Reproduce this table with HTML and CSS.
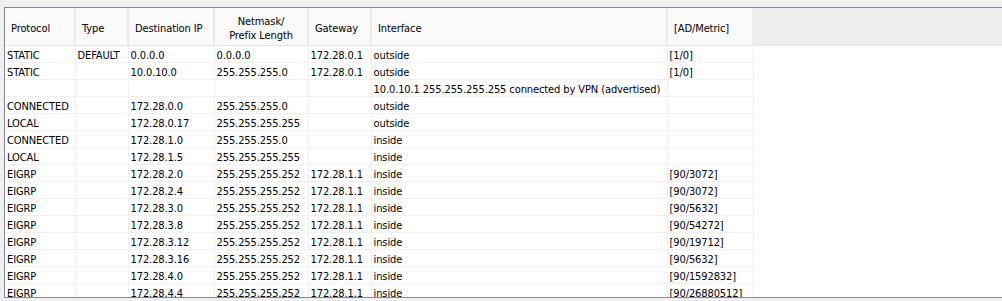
FILE: index.html
```html
<!DOCTYPE html>
<html>
<head>
    <title>Routing Table</title>
    <link rel="stylesheet" href="styles.css">
</head>
<body>
    <div class="grid">
        <table class="routes">
            <colgroup>
                <col class="c-proto">
                <col class="c-type">
                <col class="c-dest">
                <col class="c-mask">
                <col class="c-gw">
                <col class="c-if">
                <col class="c-metric">
                <col>
            </colgroup>
            <thead>
                <tr>
                    <th>Protocol</th>
                    <th>Type</th>
                    <th>Destination IP</th>
                    <th class="center">Netmask/<br>Prefix Length</th>
                    <th>Gateway</th>
                    <th>Interface</th>
                    <th>[AD/Metric]</th>
                    <th class="filler"></th>
                </tr>
            </thead>
            <tbody>
                <tr><td>STATIC</td><td>DEFAULT</td><td>0.0.0.0</td><td>0.0.0.0</td><td>172.28.0.1</td><td>outside</td><td>[1/0]</td><td class="filler"></td></tr>
                <tr><td>STATIC</td><td></td><td>10.0.10.0</td><td>255.255.255.0</td><td>172.28.0.1</td><td>outside</td><td>[1/0]</td><td class="filler"></td></tr>
                <tr><td></td><td></td><td></td><td></td><td></td><td>10.0.10.1 255.255.255.255 connected by VPN (advertised)</td><td></td><td class="filler"></td></tr>
                <tr><td>CONNECTED</td><td></td><td>172.28.0.0</td><td>255.255.255.0</td><td></td><td>outside</td><td></td><td class="filler"></td></tr>
                <tr><td>LOCAL</td><td></td><td>172.28.0.17</td><td>255.255.255.255</td><td></td><td>outside</td><td></td><td class="filler"></td></tr>
                <tr><td>CONNECTED</td><td></td><td>172.28.1.0</td><td>255.255.255.0</td><td></td><td>inside</td><td></td><td class="filler"></td></tr>
                <tr><td>LOCAL</td><td></td><td>172.28.1.5</td><td>255.255.255.255</td><td></td><td>inside</td><td></td><td class="filler"></td></tr>
                <tr><td>EIGRP</td><td></td><td>172.28.2.0</td><td>255.255.255.252</td><td>172.28.1.1</td><td>inside</td><td>[90/3072]</td><td class="filler"></td></tr>
                <tr><td>EIGRP</td><td></td><td>172.28.2.4</td><td>255.255.255.252</td><td>172.28.1.1</td><td>inside</td><td>[90/3072]</td><td class="filler"></td></tr>
                <tr><td>EIGRP</td><td></td><td>172.28.3.0</td><td>255.255.255.252</td><td>172.28.1.1</td><td>inside</td><td>[90/5632]</td><td class="filler"></td></tr>
                <tr><td>EIGRP</td><td></td><td>172.28.3.8</td><td>255.255.255.252</td><td>172.28.1.1</td><td>inside</td><td>[90/54272]</td><td class="filler"></td></tr>
                <tr><td>EIGRP</td><td></td><td>172.28.3.12</td><td>255.255.255.252</td><td>172.28.1.1</td><td>inside</td><td>[90/19712]</td><td class="filler"></td></tr>
                <tr><td>EIGRP</td><td></td><td>172.28.3.16</td><td>255.255.255.252</td><td>172.28.1.1</td><td>inside</td><td>[90/5632]</td><td class="filler"></td></tr>
                <tr><td>EIGRP</td><td></td><td>172.28.4.0</td><td>255.255.255.252</td><td>172.28.1.1</td><td>inside</td><td>[90/1592832]</td><td class="filler"></td></tr>
                <tr><td>EIGRP</td><td></td><td>172.28.4.4</td><td>255.255.255.252</td><td>172.28.1.1</td><td>inside</td><td>[90/26880512]</td><td class="filler"></td></tr>
            </tbody>
        </table>
    </div>
</body>
</html>
```

FILE: styles.css
```css
body {
    margin: 0;
    padding: 7px 0 0 4px;
    background-color: #F0F0F0;
    font-family: 'DejaVu Sans Condensed', 'DejaVu Sans', sans-serif;
    font-size: 11px;
    letter-spacing: -0.1px;
    color: #000;
    overflow: hidden;
}

.grid {
    width: 1010px;
    height: 289px;
    background-color: #FFFFFF;
    border-top: 1px solid #828790;
    border-left: 1px solid #828790;
    border-bottom: 1px solid #828790;
    overflow: hidden;
}

.routes {
    width: 100%;
    table-layout: fixed;
    border-collapse: collapse;
}

.c-proto { width: 70px; }
.c-type { width: 53px; }
.c-dest { width: 86px; }
.c-mask { width: 94px; }
.c-gw { width: 63px; }
.c-if { width: 296px; }
.c-metric { width: 86px; }

.routes th {
    height: 33px;
    padding: 4px 0 0 6px;
    background-color: #FAFAFA;
    border-right: 2px solid #EAEAEA;
    border-bottom: 1px solid #E4E4E4;
    font-weight: normal;
    text-align: left;
    line-height: 14px;
    white-space: nowrap;
}

.routes th.center {
    text-align: center;
    padding: 4px 0 0 0;
}

.routes th.filler {
    background-color: #EEEEEE;
    border-right: none;
}

.routes td {
    height: 12px;
    padding: 4px 0 0 2px;
    border-right: 1px solid #F0F0F0;
    border-bottom: 1px solid #F0F0F0;
    line-height: 12px;
    white-space: nowrap;
    overflow: visible;
}

.routes td.filler {
    border: none;
}
```
